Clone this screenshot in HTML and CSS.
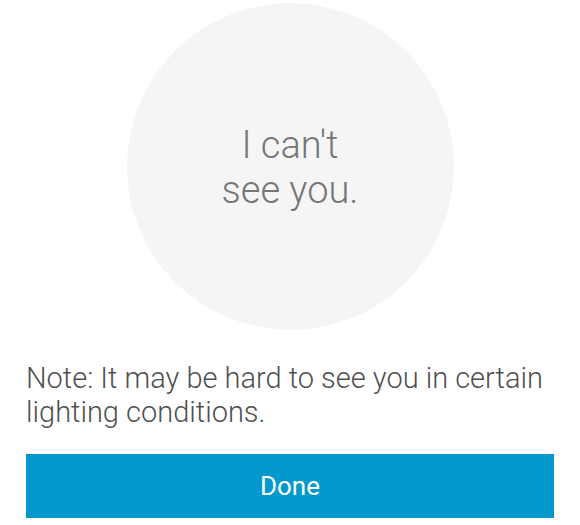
FILE: index.html
```html
<!DOCTYPE html>
<html>
<head>
<meta charset="utf-8">
<link rel="stylesheet" href="styles.css">
</head>
<body>
<div class="screen">
  <div class="circle">
    <div class="circle-text">I can't<br>see you.</div>
  </div>
  <p class="note">Note: It may be hard to see you in certain lighting conditions.</p>
  <button class="done">Done</button>
</div>
</body>
</html>
```
FILE: styles.css
```css
html, body {
  margin: 0;
  padding: 0;
  background: #ffffff;
}
.screen {
  width: 580px;
  height: 525px;
  box-sizing: border-box;
  padding: 3px 26px 0 26px;
  display: flex;
  flex-direction: column;
  font-family: Roboto, "Liberation Sans", sans-serif;
}
.circle {
  width: 327px;
  height: 327px;
  border-radius: 50%;
  background: #f5f5f5;
  align-self: center;
  display: flex;
  align-items: center;
  justify-content: center;
}
.circle-text {
  font-weight: 300;
  font-size: 38px;
  line-height: 45px;
  color: #777777;
  text-align: center;
  margin-top: 3px;
}
.note {
  margin: 31px 0 0 0;
  font-weight: 300;
  font-size: 29px;
  line-height: 34px;
  color: #505050;
}
.done {
  margin-top: 25px;
  height: 64px;
  width: 100%;
  border: none;
  background: #0399cc;
  color: #ffffff;
  font-family: Roboto, "Liberation Sans", sans-serif;
  font-size: 26px;
  font-weight: 400;
  padding: 0;
}
```
